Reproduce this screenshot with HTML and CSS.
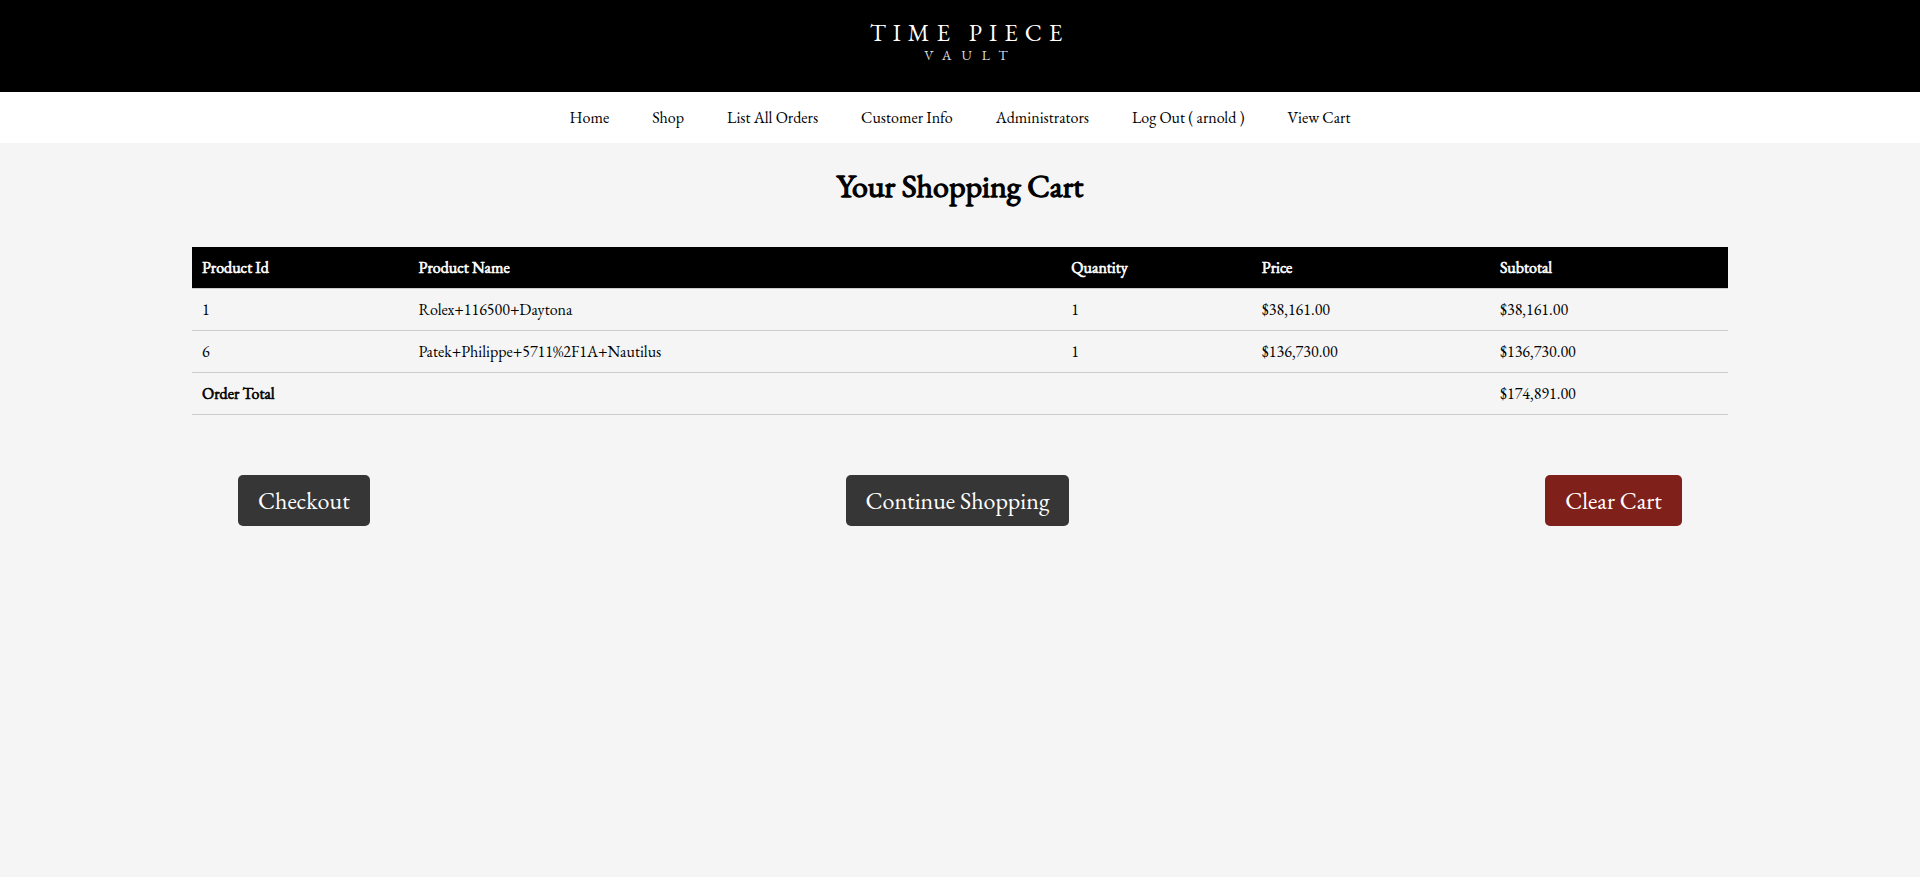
FILE: index.html
```html
<!DOCTYPE html>
<html lang="en">
<head>
<meta charset="utf-8">
<title>Your Shopping Cart</title>
<link rel="stylesheet" href="styles.css">
</head>
<body>
<header class="banner">
  <div class="logo">
    <span class="logo-main">TIME PIECE</span>
    <span class="logo-sub">VAULT</span>
  </div>
</header>
<nav class="menu">
  <a href="#">Home</a>
  <a href="#">Shop</a>
  <a href="#">List All Orders</a>
  <a href="#">Customer Info</a>
  <a href="#">Administrators</a>
  <a href="#">Log Out ( arnold )</a>
  <a href="#">View Cart</a>
</nav>
<main class="cart">
  <h1 class="title">Your Shopping Cart</h1>
  <table class="items">
    <colgroup>
      <col class="col-id"><col class="col-name"><col class="col-qty"><col class="col-price"><col class="col-subtotal">
    </colgroup>
    <thead>
      <tr><th scope="col">Product Id</th><th scope="col">Product Name</th><th scope="col">Quantity</th><th scope="col">Price</th><th scope="col">Subtotal</th></tr>
    </thead>
    <tbody>
      <tr><td>1</td><td>Rolex+116500+Daytona</td><td>1</td><td>$38,161.00</td><td>$38,161.00</td></tr>
      <tr><td>6</td><td>Patek+Philippe+5711%2F1A+Nautilus</td><td>1</td><td>$136,730.00</td><td>$136,730.00</td></tr>
      <tr><th scope="row" colspan="4">Order Total</th><td>$174,891.00</td></tr>
    </tbody>
  </table>
  <div class="actions">
    <button type="button" class="btn">Checkout</button>
    <button type="button" class="btn">Continue Shopping</button>
    <button type="button" class="btn btn-danger">Clear Cart</button>
  </div>
</main>
</body>
</html>
```

FILE: styles.css
```css
body {
  margin: 0;
  background: #f5f5f5;
  color: #000;
  font-family: "EB Garamond", "Liberation Serif", serif;
  font-size: 16px;
  line-height: 21px;
}

.banner {
  display: flex;
  justify-content: center;
  padding: 20px 0 28px;
  background: #000;
  color: #fff;
}

.logo {
  display: flex;
  flex-direction: column;
  align-items: center;
  padding-left: 12px;
}

.logo-main {
  padding-left: 7px;
  font-size: 24px;
  line-height: 26px;
  letter-spacing: 7px;
}

.logo-sub {
  padding-left: 10px;
  color: #ddd;
  font-size: 14px;
  line-height: 18px;
  letter-spacing: 10px;
}

.menu {
  display: flex;
  justify-content: center;
  gap: 43px;
  padding: 15px 0;
  background: #fff;
}

.menu a {
  color: #000;
  text-decoration: none;
}

.cart {
  width: 80%;
  margin: 0 auto;
}

/* Headings thicken the regular cut instead of using the wider bold one */
.title,
.items th {
  font-weight: 400;
  -webkit-text-stroke: 0.04em currentColor;
}

.title {
  margin: 0;
  padding: 22px 0 40px;
  font-size: 32px;
  line-height: 42px;
  text-align: center;
}

.items {
  width: 100%;
  table-layout: fixed;
  border-collapse: collapse;
}

.col-id { width: 14.1%; }
.col-name { width: 42.5%; }
.col-qty { width: 12.4%; }
.col-price { width: 15.5%; }
.col-subtotal { width: 15.5%; }

.items th,
.items td {
  padding: 10px;
  border-bottom: 1px solid #ccc;
  text-align: left;
}

.items thead th {
  background: #000;
  color: #fff;
}

.actions {
  display: flex;
  justify-content: space-between;
  padding: 60px 3%;
}

.btn {
  padding: 10px 20px;
  border: 0;
  border-radius: 5px;
  background: #363636;
  color: #fff;
  font: inherit;
  font-size: 24px;
  line-height: 31px;
}

.btn-danger {
  background: #80201b;
}
```
